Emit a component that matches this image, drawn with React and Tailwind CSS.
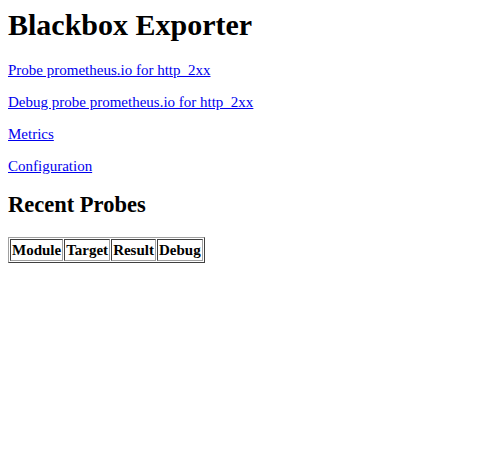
export default function App() {
  const link = "block text-[15px] leading-[17px] mb-[15px] text-[#0000ee] underline";
  return (
    <div className="bg-white min-h-[459px] px-[8px] pt-[8px] text-black" style={{ fontFamily: '"Liberation Serif", "Times New Roman", serif' }}>
      <h1 className="text-[30px] font-bold leading-[34px]">Blackbox Exporter</h1>
      <div className="mt-[20px] flex flex-col items-start">
        <a href="#" className={link}>Probe prometheus.io for http_2xx</a>
        <a href="#" className={link}>Debug probe prometheus.io for http_2xx</a>
        <a href="#" className={link}>Metrics</a>
        <a href="#" className="block text-[15px] leading-[17px] text-[#0000ee] underline">Configuration</a>
      </div>
      <h2 className="mt-[17px] text-[22.5px] font-bold leading-[26px]">Recent Probes</h2>
      <table className="mt-[19px] border border-t-[#a0a0a0] border-l-[#a0a0a0] border-b-[#404040] border-r-[#404040] border-separate border-spacing-[1px]">
        <thead>
          <tr>
            {["Module", "Target", "Result", "Debug"].map((h) => (
              <th key={h} className="border border-t-[#404040] border-l-[#404040] border-b-[#a0a0a0] border-r-[#a0a0a0] p-[1px] text-[15px] font-bold leading-[18px]">{h}</th>
            ))}
          </tr>
        </thead>
      </table>
    </div>
  );
}
